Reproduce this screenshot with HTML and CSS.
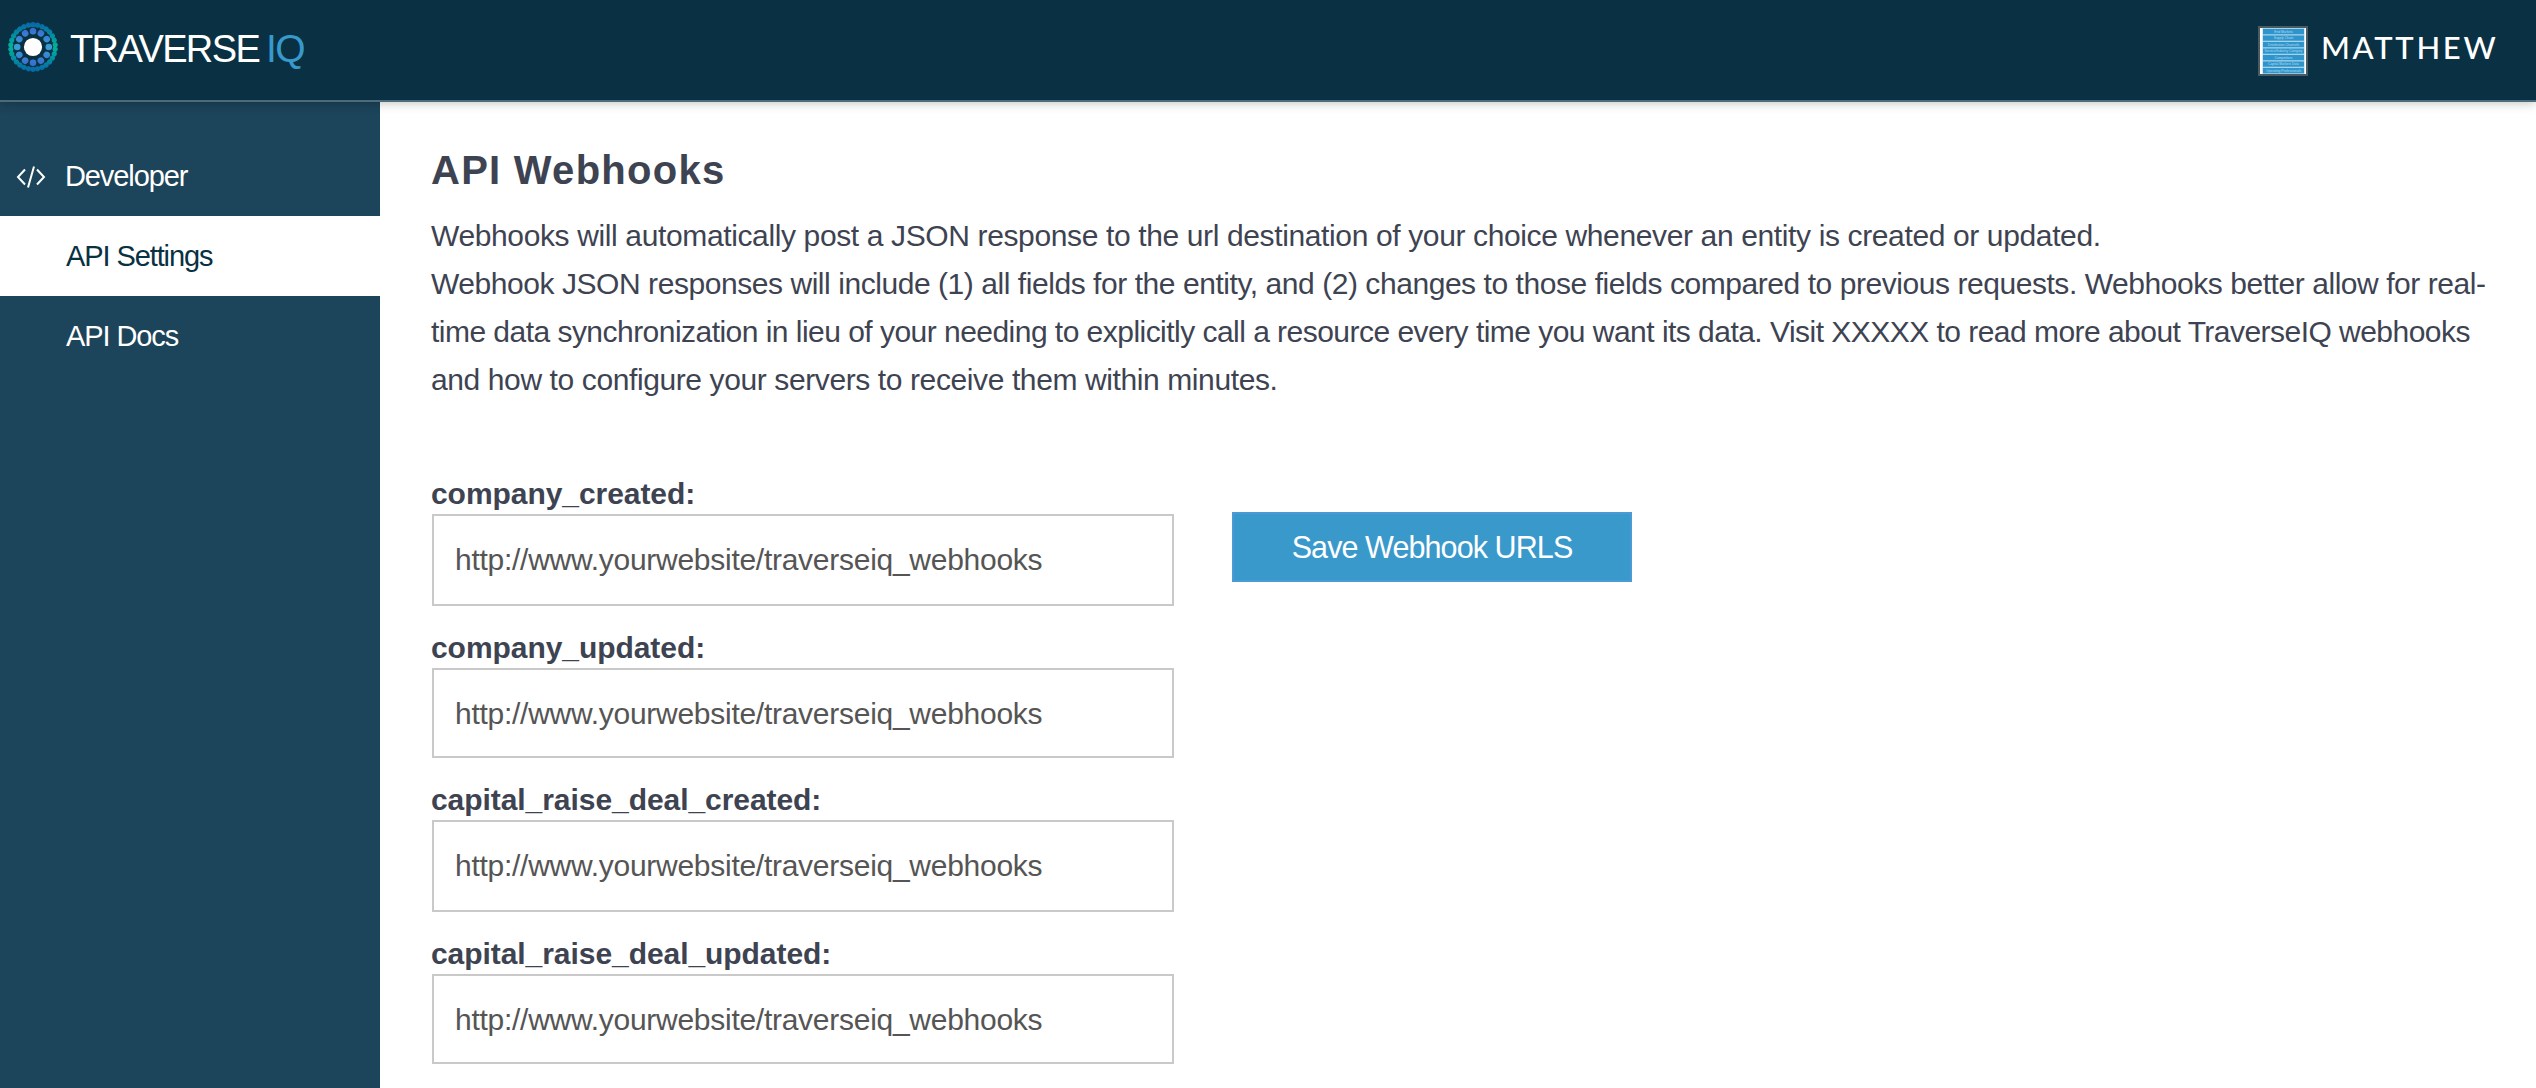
FILE: index.html
```
<!DOCTYPE html>
<html lang="en">
<head>
<meta charset="utf-8">
<title>API Webhooks</title>
<link rel="stylesheet" href="styles.css">
</head>
<body>
<header class="topbar">
  <a class="brand">
    <svg class="brand-mark" viewBox="-25 -25 50 50">
      <defs>
        <linearGradient id="outer" gradientUnits="userSpaceOnUse" x1="-24" y1="0" x2="24" y2="0">
          <stop offset="0" stop-color="#0867a6"/><stop offset=".5" stop-color="#00b39b"/><stop offset="1" stop-color="#0867a6"/>
        </linearGradient>
        <linearGradient id="inner" gradientUnits="userSpaceOnUse" x1="-17" y1="0" x2="17" y2="0">
          <stop offset="0" stop-color="#3a6fd0"/><stop offset=".5" stop-color="#369fd4"/><stop offset="1" stop-color="#3a6fd0"/>
        </linearGradient>
      </defs>
      <g transform="rotate(-90)" fill="none" stroke-linecap="round">
        <circle r="22.3" stroke="url(#outer)" stroke-width="5.2" pathLength="300" stroke-dasharray="0.01 9.99"/>
        <circle r="15.8" stroke="url(#inner)" stroke-width="6.6" pathLength="120" stroke-dasharray="0.01 9.99"/>
      </g>
      <circle r="9.1" fill="#fff"/>
    </svg>
    <span class="brand-name">TRAVERSE</span><span class="brand-suffix">IQ</span>
  </a>
  <div class="user">
    <svg class="avatar" viewBox="0 0 50 50">
      <rect width="50" height="50" fill="#4b5b61"/>
      <rect x="2" y="2" width="46" height="46" fill="#fff"/>
      <rect x="4.5" y="2" width="42" height="46" fill="#a5d3ec"/>
      <g fill="#2e95cc">
        <rect x="5" y="3" width="41" height="5.2"/><rect x="5" y="9.5" width="41" height="5.2"/>
        <rect x="5" y="16" width="41" height="5.2"/><rect x="5" y="22.5" width="41" height="5.2"/>
        <rect x="5" y="29" width="41" height="5.2"/><rect x="5" y="35.5" width="41" height="5.2"/>
        <rect x="5" y="42" width="41" height="5.2"/>
      </g>
      <g class="avatar-text">
        <text x="25.5" y="6.7">End Markets</text><text x="25.5" y="13.2">Supply Chain</text>
        <text x="25.5" y="19.7">Distribution Channels</text><text x="25.5" y="26.2">Service/Industry Category</text>
        <text x="25.5" y="32.7">Competitors</text><text x="25.5" y="39.2">Capital Markets Data</text>
        <text x="25.5" y="45.7">Operating Professionals</text>
      </g>
    </svg>
    <span class="user-name">MATTHEW</span>
  </div>
</header>
<div class="layout">
  <nav class="sidebar">
    <a class="nav-item">
      <svg class="nav-icon" viewBox="0 0 30 24"><path d="M9 4.5 2 12l7 7.5M18 1.5l-6 21M21 4.5l7 7.5-7 7.5"/></svg>
      <span>Developer</span>
    </a>
    <a class="nav-item nav-item-active"><span>API Settings</span></a>
    <a class="nav-item"><span>API Docs</span></a>
  </nav>
  <main class="content">
    <h1 class="title">API Webhooks</h1>
    <p class="intro">
      <span class="line line-1">Webhooks will automatically post a JSON response to the url destination of your choice whenever an entity is created or updated.</span>
      <span class="line line-2">Webhook JSON responses will include (1) all fields for the entity, and (2) changes to those fields compared to previous requests. Webhooks better allow for real-</span>
      <span class="line line-3">time data synchronization in lieu of your needing to explicitly call a resource every time you want its data. Visit XXXXX to read more about TraverseIQ webhooks</span>
      <span class="line line-4">and how to configure your servers to receive them within minutes.</span>
    </p>
    <form class="webhooks">
      <div class="fields">
        <label class="field"><span class="label">company_created:</span><input class="input" value="http://www.yourwebsite/traverseiq_webhooks"></label>
        <label class="field"><span class="label">company_updated:</span><input class="input" value="http://www.yourwebsite/traverseiq_webhooks"></label>
        <label class="field"><span class="label">capital_raise_deal_created:</span><input class="input" value="http://www.yourwebsite/traverseiq_webhooks"></label>
        <label class="field"><span class="label">capital_raise_deal_updated:</span><input class="input" value="http://www.yourwebsite/traverseiq_webhooks"></label>
      </div>
      <button class="save" type="button">Save Webhook URLS</button>
    </form>
  </main>
</div>
</body>
</html>
```
FILE: styles.css
```
* { box-sizing: border-box; }
body {
  margin: 0;
  height: 1088px;
  overflow: hidden;
  display: flex;
  flex-direction: column;
  background: #fff;
  color: #3e4352;
  font-family: "Liberation Sans", Arial, sans-serif;
  font-size: 30px;
}
.topbar {
  position: relative;
  z-index: 1;
  flex: none;
  display: flex;
  justify-content: space-between;
  height: 102px;
  background: #093143;
  border-bottom: 2px solid #4d6b79;
  box-shadow: 0 1px 10px rgba(0, 0, 0, .25);
}
.brand { display: flex; padding-left: 8px; color: #fff; }
.brand-mark { width: 50px; height: 50px; margin-top: 22px; }
.brand-name {
  margin-left: 12px;
  width: 196px;
  font-size: 38px;
  line-height: 98px;
  letter-spacing: -1.6px;
}
.brand-suffix {
  color: #3899cb;
  font-size: 39px;
  line-height: 98px;
  letter-spacing: -1.5px;
}
.user { display: flex; width: 278px; color: #fff; }
.avatar { width: 50px; height: 50px; margin-top: 26px; }
.avatar-text {
  fill: #b5daee;
  font-size: 3.3px;
  text-anchor: middle;
}
.user-name {
  margin-left: 13px;
  font-family: Lato, sans-serif;
  font-size: 31px;
  font-weight: 500;
  line-height: 94px;
  letter-spacing: 2.7px;
}
.layout { flex: 1; display: flex; min-height: 0; }
.sidebar {
  width: 380px;
  flex: none;
  padding-top: 34px;
  background: #1c445a;
}
.nav-item {
  display: flex;
  align-items: center;
  height: 80px;
  padding-left: 66px;
  color: #fff;
  font-size: 29px;
  letter-spacing: -1.1px;
}
.nav-item:first-child { padding-left: 16px; }
.nav-item-active { background: #fff; color: #093143; }
.nav-icon {
  width: 30px;
  height: 24px;
  margin: 2px 19px 0 0;
  fill: none;
  stroke: #fff;
  stroke-width: 2;
}
.content { flex: 1; padding: 44px 0 0 51px; }
.title {
  margin: 0 0 18px;
  font-size: 40px;
  line-height: 48px;
  letter-spacing: 1.26px;
}
.intro { margin: 0 0 69px; }
.line { display: block; line-height: 48px; white-space: nowrap; }
.line-1 { letter-spacing: -.37px; }
.line-2 { letter-spacing: -.444px; }
.line-3 { letter-spacing: -.531px; }
.line-4 { letter-spacing: -.394px; }
.webhooks { display: flex; align-items: flex-start; gap: 58px; }
.fields {
  display: flex;
  flex-direction: column;
  gap: 21px;
  width: 743px;
}
.field { display: flex; flex-direction: column; }
.label {
  font-weight: bold;
  line-height: 41px;
  letter-spacing: -.06px;
}
.input {
  height: 92px;
  margin: 0 0 0 1px;
  padding: 0 21px;
  border: 2px solid #c9c9c9;
  border-radius: 0;
  background: #fff;
  color: #555;
  font: inherit;
  letter-spacing: -.27px;
}
.field:nth-child(even) .input { height: 90px; padding-top: 1px; }
.save {
  width: 400px;
  height: 70px;
  margin-top: 39px;
  padding: 0;
  border: 2px solid #4a9ad6;
  background: #3a99cb;
  color: #fff;
  font-family: inherit;
  font-size: 30.5px;
  letter-spacing: -.91px;
}
```
